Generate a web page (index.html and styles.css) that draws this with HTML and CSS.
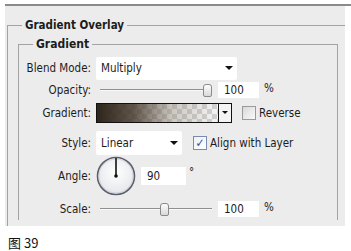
FILE: index.html
```html
<!DOCTYPE html>
<html lang="zh">
<head>
  <meta charset="UTF-8" />
  <title>Gradient Overlay</title>
  <link rel="stylesheet" href="styles.css">
</head>
<body>
  <div class="window">
    <div class="panel">
      <fieldset class="group outer">
        <legend>Gradient Overlay</legend>
        <fieldset class="group inner">
          <legend>Gradient</legend>

          <div class="row row-blend">
            <span class="label">Blend Mode:</span>
            <div class="select select-wide">Multiply<span class="arrow"></span></div>
          </div>

          <div class="row row-opacity">
            <span class="label">Opacity:</span>
            <div class="slider"><span class="thumb thumb-max"></span></div>
            <div class="num">100</div>
            <span class="unit">%</span>
          </div>

          <div class="row row-gradient">
            <span class="label">Gradient:</span>
            <div class="swatch">
              <div class="swatch-fill"></div>
              <div class="swatch-btn"><span class="arrow arrow-small"></span></div>
            </div>
            <label class="check"><span class="box"></span>Reverse</label>
          </div>

          <div class="row row-style">
            <span class="label">Style:</span>
            <div class="select select-short">Linear<span class="arrow"></span></div>
            <label class="check"><span class="box checked">&#10003;</span>Align with Layer</label>
          </div>

          <div class="row row-angle">
            <span class="label">Angle:</span>
            <div class="dial">
              <svg width="40" height="40" viewBox="0 0 40 40">
                <defs>
                  <radialGradient id="dialFill" cx="0.5" cy="0.4" r="0.6">
                    <stop offset="0" stop-color="#ffffff"/>
                    <stop offset="1" stop-color="#e4e6ea"/>
                  </radialGradient>
                </defs>
                <circle cx="20" cy="20" r="18.5" fill="url(#dialFill)" stroke="#5a5f6a" stroke-width="1.6"/>
                <circle cx="20" cy="20" r="17" fill="none" stroke="#c8ccd4" stroke-width="0.8"/>
                <line x1="20" y1="20" x2="20" y2="2" stroke="#111" stroke-width="1.6"/>
                <circle cx="20" cy="20" r="1.8" fill="#111"/>
              </svg>
            </div>
            <div class="num num-angle">90</div>
            <span class="unit deg">&deg;</span>
          </div>

          <div class="row row-scale">
            <span class="label">Scale:</span>
            <div class="slider"><span class="thumb thumb-mid"></span></div>
            <div class="num">100</div>
            <span class="unit">%</span>
          </div>
        </fieldset>
      </fieldset>
    </div>
  </div>

  <p class="caption">图 39</p>
</body>
</html>
```

FILE: styles.css
```css
html, body {
  margin: 0;
  padding: 0;
  background: #fff;
  font-family: 'DejaVu Sans Condensed', 'DejaVu Sans', sans-serif;
  font-size: 11px;
  color: #1c1c1c;
}

.window {
  margin: 4px 0 0 5px;
  border-top: 2px solid #8a8a8a;
}

.panel {
  width: 340px;
  height: 220px;
  background: #ececec;
  overflow: hidden;
}

.group {
  margin: 0;
  padding: 0;
  border: 1px solid #a3a3a3;
  min-width: 0;
}

.group legend {
  margin-left: 14px;
  padding: 0 3px;
  font-weight: bold;
  line-height: 14px;
}

.outer {
  margin: 12px 0 0 2px;
  border-right: none;
  border-bottom: none;
  padding-bottom: 40px;
}

.outer > legend {
  font-size: 11.5px;
}

.inner {
  width: 318px;
  margin: 5px 0 0 10px;
  padding: 6px 0 0 0;
  border-bottom: none;
  font-size: 11.5px;
}

.inner > legend {
  font-size: 12px;
}

.row {
  display: flex;
  align-items: center;
  gap: 5px;
}

.label {
  width: 72px;
  text-align: right;
  flex: none;
}

.row-blend { height: 22px; }
.row-opacity { height: 22px; }
.row-gradient { height: 24px; }
.row-style { height: 24px; margin-top: 6px; }
.row-angle { height: 40px; margin-top: 1px; }
.row-scale { height: 22px; margin-top: 2px; }

.select {
  position: relative;
  box-sizing: border-box;
  background: #fff;
  border-radius: 2px;
  padding-left: 5px;
  display: flex;
  align-items: center;
}

.select-wide { width: 141px; height: 23px; }
.select-short { width: 86px; height: 24px; }

.arrow {
  position: absolute;
  right: 4px;
  top: 50%;
  margin-top: -2px;
  width: 0;
  height: 0;
  border-left: 4px solid transparent;
  border-right: 4px solid transparent;
  border-top: 4px solid #111;
}

.slider {
  position: relative;
  width: 116px;
  height: 14px;
  margin-left: 4px;
  flex: none;
}

.slider::before {
  content: "";
  position: absolute;
  left: 0;
  right: 4px;
  top: 6px;
  height: 1px;
  background: #8f8f8f;
  border-bottom: 1px solid #fafafa;
}

.thumb {
  position: absolute;
  top: 1px;
  width: 7px;
  height: 11px;
  background: linear-gradient(#fdfdfd, #d9d9d9);
  border: 1px solid #8a8a8a;
  border-radius: 3px 3px 2px 2px;
}

.thumb-max { left: 103px; }
.thumb-mid { left: 60px; }

.num {
  box-sizing: border-box;
  width: 41px;
  height: 16px;
  background: #fff;
  padding-left: 6px;
  line-height: 16px;
  margin-left: -3px;
}

.num-angle {
  width: 45px;
  height: 18px;
  line-height: 18px;
  margin-left: 0;
}

.unit {
  margin-top: -4px;
}

.deg {
  margin-top: -8px;
  margin-left: -2px;
}

.swatch {
  display: flex;
  box-sizing: border-box;
  width: 136px;
  height: 20px;
  border: 1px solid #111;
  background: #fff;
}

.swatch-fill {
  flex: 1;
  background:
    linear-gradient(90deg, #2e251c 0%, rgba(70, 58, 44, 0.85) 30%, rgba(140, 128, 112, 0.4) 62%, rgba(255, 255, 255, 0) 100%),
    repeating-conic-gradient(#d2d2d2 0 25%, #f6f6f6 0 50%) 0 0 / 10px 10px;
}

.swatch-btn {
  position: relative;
  width: 12px;
  border-left: 1px solid #111;
  background: #f4f4f4;
}

.swatch-btn .arrow-small {
  right: 3px;
  border-left-width: 3px;
  border-right-width: 3px;
  border-top-width: 3px;
}

.check {
  display: flex;
  align-items: center;
  gap: 3px;
  margin-left: 5px;
}

.box {
  box-sizing: border-box;
  width: 14px;
  height: 14px;
  border: 1px solid #9a9a9a;
  background: linear-gradient(135deg, #d9d9d9, #fafafa);
  display: flex;
  align-items: center;
  justify-content: center;
  font-size: 12px;
  font-weight: bold;
  color: #2f4fa8;
}

.box.checked {
  border-color: #7b8bb0;
  background: linear-gradient(135deg, #eef0f6, #ffffff);
}

.row-style .check {
  margin-left: 6px;
}

.dial {
  width: 40px;
  height: 40px;
  flex: none;
}

.dial svg {
  display: block;
}

.caption {
  margin: 7px 0 0 8px;
  font-family: 'Noto Sans CJK SC', sans-serif;
  font-size: 13px;
  color: #111;
}
```
